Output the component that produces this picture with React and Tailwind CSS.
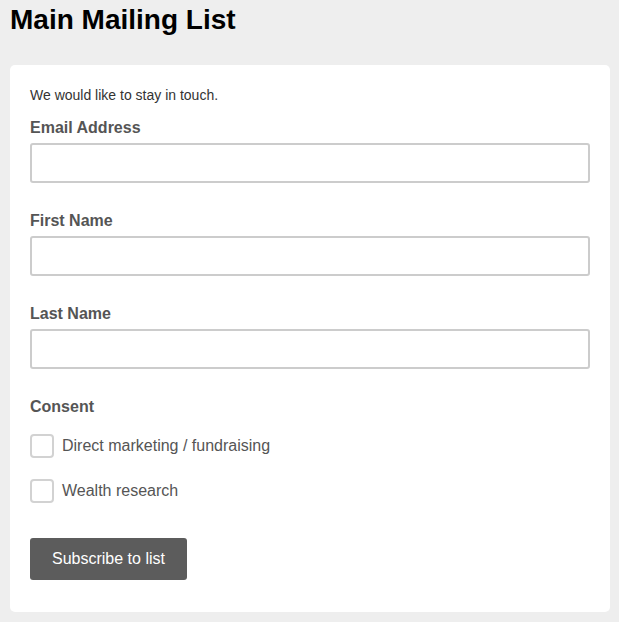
export default function App() {
  const fields = ["Email Address", "First Name", "Last Name"];
  const consents = ["Direct marketing / fundraising", "Wealth research"];
  return (
    <div
      className="min-h-[622px] bg-[#eeeeee] px-[10px] pt-[4px] pb-[10px]"
      style={{ fontFamily: '"Liberation Sans", Arial, sans-serif' }}
    >
      <h1 className="text-[28px] leading-[32px] font-bold text-black">Main Mailing List</h1>
      <div className="mt-[29px] w-[600px] rounded-[5px] bg-white px-[20px] pt-[20px] pb-[32px]">
        <p className="text-[14px] leading-[20px] text-[#333333]">We would like to stay in touch.</p>
        {fields.map((f, i) => (
          <div key={f} className={i === 0 ? "mt-[13px]" : "mt-[28px]"}>
            <label className="block text-[16px] leading-[20px] font-bold text-[#555555]">{f}</label>
            <input
              type="text"
              className="mt-[5px] block h-[40px] w-[560px] rounded-[3px] border-2 border-[#cccccc] bg-white outline-none"
            />
          </div>
        ))}
        <div className="mt-[28px] text-[16px] leading-[20px] font-bold text-[#555555]">Consent</div>
        <div className="mt-[17px] flex flex-col gap-[21px]">
          {consents.map((c) => (
            <label key={c} className="flex items-center gap-[8px]">
              <span className="block h-[24px] w-[24px] rounded-[4px] border-2 border-[#d2d2d2] bg-white" />
              <span className="text-[16px] leading-[20px] text-[#555555]">{c}</span>
            </label>
          ))}
        </div>
        <button className="mt-[35px] h-[42px] rounded-[3px] bg-[#5c5c5c] px-[22px] text-[16px] text-white">
          Subscribe to list
        </button>
      </div>
    </div>
  );
}
